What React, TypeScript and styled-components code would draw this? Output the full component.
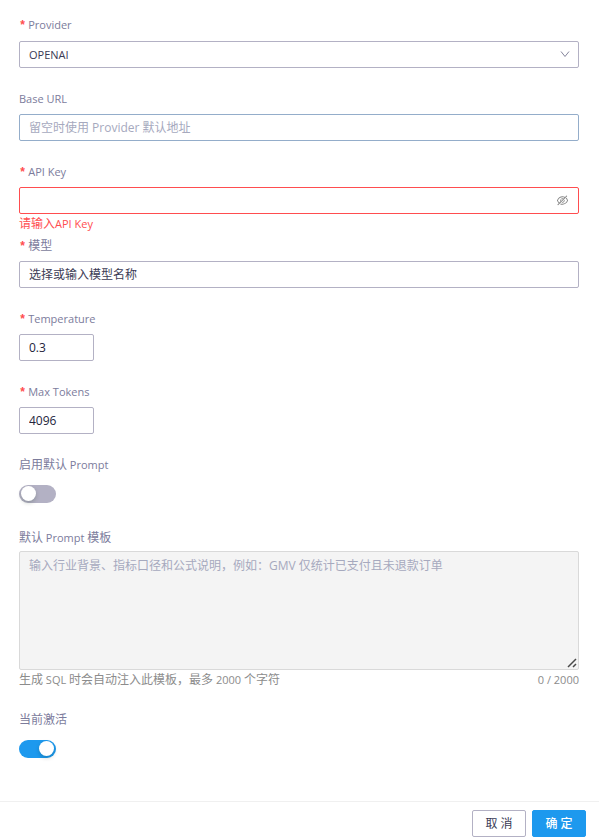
import React, { useState } from "react";
import styled, { createGlobalStyle } from "styled-components";

const GlobalStyle = createGlobalStyle`
  * { box-sizing: border-box; }
  body {
    margin: 0;
    background: #fff;
    color: #3b3b55;
    font-family: "Open Sans", "Noto Sans CJK SC", sans-serif;
    font-size: 12px;
    line-height: 18px;
  }
  input, select, textarea, button { font: inherit; }
`;

const Page = styled.form`
  display: flex;
  flex-direction: column;
  min-height: 100vh;
`;

const Fields = styled.div`
  flex: 1;
  display: flex;
  flex-direction: column;
  gap: 22px;
  padding: 16px 20px 22px 19px;
`;

const FieldBox = styled.div<{ $gap?: number; $flush?: boolean }>`
  display: flex;
  flex-direction: column;
  align-items: flex-start;
  gap: ${(p) => p.$gap ?? 6}px;
  margin-bottom: ${(p) => (p.$flush ? "-22px" : "0")};
`;

const Latin = styled.span`
  font-size: 11px;
`;

const Label = styled.label<{ $required?: boolean }>`
  color: #7c7c9c;
  height: 18px;
  white-space: nowrap;
  &::before {
    content: ${(p) => (p.$required ? '"*"' : "none")};
    color: #ff4d4f;
    font-family: "Liberation Mono", monospace;
    font-weight: 700;
    margin-right: 2px;
  }
`;

const Control = styled.div`
  position: relative;
  width: 100%;
`;

const TextInput = styled.input<{ $tone?: string; $hint?: string; $short?: boolean }>`
  display: block;
  width: ${(p) => (p.$short ? "75px" : "100%")};
  height: 27px;
  padding: 0 9px;
  border: 1px solid ${(p) => p.$tone ?? "#b3b1c4"};
  border-radius: 2px;
  background: #fff;
  color: #24243c;
  outline: none;
  &::placeholder { color: ${(p) => p.$hint ?? "#a6a9be"}; opacity: 1; }
`;

const Select = styled.select`
  display: block;
  appearance: none;
  width: 100%;
  height: 27px;
  padding: 0 28px 0 9px;
  border: 1px solid #b3b1c4;
  border-radius: 2px;
  background: #fff;
  color: #3b3b55;
  font-size: 11px;
  outline: none;
`;

const Chevron = styled.svg`
  position: absolute;
  right: 9px;
  top: 8px;
  pointer-events: none;
`;

const EyeButton = styled.button`
  position: absolute;
  right: 10px;
  top: 7px;
  display: flex;
  padding: 0;
  border: 0;
  background: none;
  color: #858585;
  cursor: pointer;
`;

const ErrorText = styled.div`
  height: 22px;
  margin-top: -5px;
  color: #ff4d4f;
`;

const SwitchSlot = styled.div`
  height: 27px;
  padding-top: 5px;
`;

const Switch = styled.input`
  display: block;
  appearance: none;
  width: 37px;
  height: 18px;
  margin: 0;
  padding: 1px 2px;
  border-radius: 9px;
  background: #b3b1c4;
  cursor: pointer;
  &::before {
    content: "";
    display: block;
    width: 15px;
    height: 15px;
    border-radius: 50%;
    background: #fff;
    box-shadow: 0 2px 4px rgba(0, 35, 11, 0.2);
  }
  &:checked { background: #1d99ee; }
  &:checked::before { margin-left: 18px; }
`;

const TextArea = styled.textarea`
  display: block;
  width: 100%;
  height: 119px;
  padding: 5px 9px;
  border: 1px solid #d9d9d9;
  border-radius: 2px;
  background: #f4f4f4;
  color: #3b3b55;
  resize: none;
  &::placeholder { color: #a6a9be; opacity: 1; }
`;

const Grip = styled.svg`
  position: absolute;
  right: 2px;
  bottom: 2px;
  pointer-events: none;
`;

const HelpRow = styled.div`
  display: flex;
  justify-content: space-between;
  width: 100%;
  margin-top: -3px;
  color: #8c8c8c;
`;

const Footer = styled.footer`
  display: flex;
  justify-content: flex-end;
  gap: 6px;
  padding: 8px 13px 3px;
  border-top: 1px solid #f0f0f0;
`;

const Button = styled.button<{ $primary?: boolean }>`
  width: 54px;
  height: 27px;
  padding: 0;
  border: 1px solid ${(p) => (p.$primary ? "#1d99ee" : "#b3b1c4")};
  border-radius: 2px;
  background: ${(p) => (p.$primary ? "#1d99ee" : "#fff")};
  color: ${(p) => (p.$primary ? "#fff" : "#3b3b55")};
  font-weight: ${(p) => (p.$primary ? 500 : 400)};
  cursor: pointer;
`;

export default function App() {
  const [keyVisible, setKeyVisible] = useState(false);
  const [usePrompt, setUsePrompt] = useState(false);
  const [active, setActive] = useState(true);
  const [prompt, setPrompt] = useState("");

  return (
    <>
      <GlobalStyle />
      <Page onSubmit={(e) => e.preventDefault()}>
        <Fields>
          <FieldBox $gap={7}>
            <Label $required htmlFor="provider"><Latin>Provider</Latin></Label>
            <Control>
              <Select id="provider" defaultValue="OPENAI">
                <option>OPENAI</option>
              </Select>
              <Chevron width="10" height="10" viewBox="0 0 10 10" fill="none" stroke="#85859c">
                <path d="M1 2.5 5 7.5 9 2.5" />
              </Chevron>
            </Control>
          </FieldBox>

          <FieldBox>
            <Label htmlFor="base-url"><Latin>Base URL</Latin></Label>
            <TextInput id="base-url" $tone="#94adca" placeholder="留空时使用 Provider 默认地址" />
          </FieldBox>

          <FieldBox $flush>
            <Label $required htmlFor="api-key"><Latin>API Key</Latin></Label>
            <Control>
              <TextInput
                id="api-key"
                type={keyVisible ? "text" : "password"}
                $tone="#ff4d4f"
                aria-invalid="true"
                aria-describedby="api-key-error"
              />
              <EyeButton type="button" aria-label="显示或隐藏" onClick={() => setKeyVisible(!keyVisible)}>
                <svg width="13" height="13" viewBox="0 0 1024 1024" fill="currentColor">
                  <path d="M942.2 486.2Q889.47 375.11 816.7 305l-50.88 50.88C807.31 395.53 843.45 447.4 874.7 512 791.5 684.2 673.4 766 512 766q-72.67 0-133.87-22.38L323 798.75Q408 838 512 838q288.3 0 430.2-300.3a60.29 60.29 0 000-51.5zm-63.57-320.64L836 122.88a8 8 0 00-11.32 0L715.31 232.2Q624.86 186 512 186q-288.3 0-430.2 300.3a60.3 60.3 0 000 51.5q56.69 119.4 136.5 191.41L112.48 835a8 8 0 000 11.31L155.17 889a8 8 0 0011.31 0l712.15-712.12a8 8 0 000-11.32zM149.3 512C232.6 339.8 350.7 258 512 258c54.54 0 104.13 9.36 149.12 28.39l-70.3 70.3a176 176 0 00-238.13 238.13l-83.42 83.42C223.1 637.49 183.3 582.28 149.3 512zm246.7 0a112.11 112.11 0 01146.2-106.69L401.31 546.2A112 112 0 01396 512z" />
                  <path d="M508 624c-3.46 0-6.87-.16-10.25-.47l-52.82 52.82a176.09 176.09 0 00227.42-227.42l-52.82 52.82c.31 3.38.47 6.79.47 10.25a111.94 111.94 0 01-112 112z" />
                </svg>
              </EyeButton>
            </Control>
            <ErrorText id="api-key-error">请输入<Latin>API Key</Latin></ErrorText>
          </FieldBox>

          <FieldBox>
            <Label $required htmlFor="model">模型</Label>
            <TextInput id="model" $hint="#3b3b55" placeholder="选择或输入模型名称" />
          </FieldBox>

          <FieldBox>
            <Label $required htmlFor="temperature"><Latin>Temperature</Latin></Label>
            <TextInput id="temperature" $short inputMode="decimal" defaultValue="0.3" />
          </FieldBox>

          <FieldBox>
            <Label $required htmlFor="max-tokens"><Latin>Max Tokens</Latin></Label>
            <TextInput id="max-tokens" $short inputMode="numeric" defaultValue="4096" />
          </FieldBox>

          <FieldBox>
            <Label htmlFor="use-prompt">启用默认<Latin> Prompt</Latin></Label>
            <SwitchSlot>
              <Switch
                id="use-prompt"
                type="checkbox"
                role="switch"
                checked={usePrompt}
                onChange={(e) => setUsePrompt(e.target.checked)}
              />
            </SwitchSlot>
          </FieldBox>

          <FieldBox $gap={4}>
            <Label htmlFor="prompt">默认<Latin> Prompt </Latin>模板</Label>
            <Control>
              <TextArea
                id="prompt"
                disabled={!usePrompt}
                maxLength={2000}
                value={prompt}
                onChange={(e) => setPrompt(e.target.value)}
                placeholder="输入行业背景、指标口径和公式说明，例如：GMV 仅统计已支付且未退款订单"
              />
              <Grip width="10" height="10" viewBox="0 0 10 10" stroke="#4a4a4a" strokeWidth="1.5" fill="none">
                <path d="M1 9 9 1M6 9 9 6" />
              </Grip>
            </Control>
            <HelpRow>
              <span>生成<Latin> SQL </Latin>时会自动注入此模板，最多<Latin> 2000 </Latin>个字符</span>
              <Latin>{prompt.length} / 2000</Latin>
            </HelpRow>
          </FieldBox>

          <FieldBox>
            <Label htmlFor="active">当前激活</Label>
            <SwitchSlot>
              <Switch
                id="active"
                type="checkbox"
                role="switch"
                checked={active}
                onChange={(e) => setActive(e.target.checked)}
              />
            </SwitchSlot>
          </FieldBox>
        </Fields>
        <Footer>
          <Button type="button">取 消</Button>
          <Button type="submit" $primary>确 定</Button>
        </Footer>
      </Page>
    </>
  );
}
